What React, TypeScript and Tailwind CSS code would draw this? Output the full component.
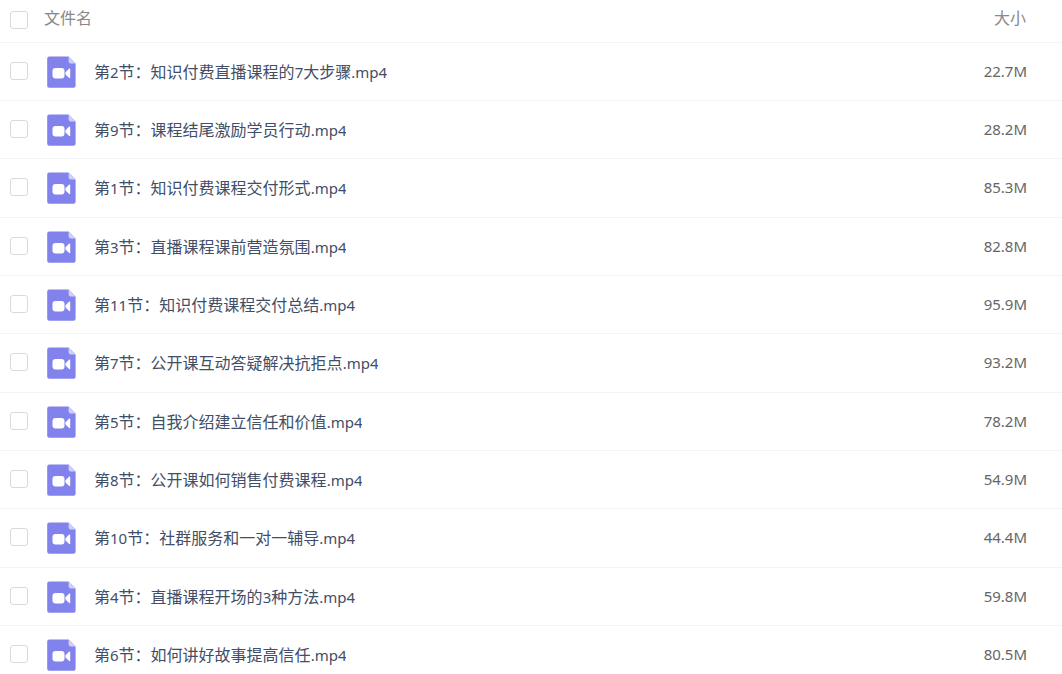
import React from 'react'

interface FileItem {
    name: string
    size: string
}

const files: FileItem[] = [
    { name: '第2节：知识付费直播课程的7大步骤.mp4', size: '22.7M' },
    { name: '第9节：课程结尾激励学员行动.mp4', size: '28.2M' },
    { name: '第1节：知识付费课程交付形式.mp4', size: '85.3M' },
    { name: '第3节：直播课程课前营造氛围.mp4', size: '82.8M' },
    { name: '第11节：知识付费课程交付总结.mp4', size: '95.9M' },
    { name: '第7节：公开课互动答疑解决抗拒点.mp4', size: '93.2M' },
    { name: '第5节：自我介绍建立信任和价值.mp4', size: '78.2M' },
    { name: '第8节：公开课如何销售付费课程.mp4', size: '54.9M' },
    { name: '第10节：社群服务和一对一辅导.mp4', size: '44.4M' },
    { name: '第4节：直播课程开场的3种方法.mp4', size: '59.8M' },
    { name: '第6节：如何讲好故事提高信任.mp4', size: '80.5M' },
]

function VideoIcon() {
    return (
        <svg width="29" height="32" viewBox="0 0 29 32" className="block shrink-0" aria-hidden="true">
            <path d="M2.2 .6H21.6L28.6 7.4V29.8a2 2 0 0 1-2 2H2.2a2 2 0 0 1-2-2V2.6a2 2 0 0 1 2-2Z" fill="#8182ec" />
            <path d="M21.6 .6L28.6 7.4H23.4a1.8 1.8 0 0 1-1.8-1.8Z" fill="#cfcffa" />
            <rect x="5.5" y="12" width="12" height="10.6" rx="3" fill="#fff" />
            <path d="M23.2 13.2c0-.8-.5-1-1-.6l-3 2.8a2.4 2.4 0 0 0 0 3.8l3 2.8c.5.4 1 .2 1-.6Z" fill="#fff" />
        </svg>
    )
}

function Checkbox({ label }: { label: string }) {
    return (
        <input
            type="checkbox"
            aria-label={label}
            className="block size-[18px] appearance-none rounded-[3px] border border-[#d9d9e0] bg-white checked:border-[#8182ec] checked:bg-[#8182ec]"
        />
    )
}

// latin letters and digits run one step smaller than the Chinese text
function FileName({ name }: { name: string }) {
    return (
        <span className="truncate">
            {name.split(/([\w.]+)/).map((part, i) =>
                i % 2 ? <span key={i} className="text-[15px]">{part}</span> : part
            )}
        </span>
    )
}

export default function App() {
    return (
        <main className="w-full overflow-hidden bg-white font-['Noto_Sans','Noto_Sans_CJK_SC',sans-serif] text-base leading-6">
            <table className="w-full table-fixed border-separate border-spacing-0">
                <thead>
                    <tr className="h-[43px] text-[#888888]">
                        <th className="w-11 border-b border-[#f3f4f7] pb-0.5 pl-[10px]">
                            <Checkbox label="全选" />
                        </th>
                        <th className="border-b border-[#f3f4f7] pb-1.5 text-left font-normal">文件名</th>
                        <th className="w-40 border-b border-[#f3f4f7] pb-1.5 pr-9 text-right font-normal">大小</th>
                    </tr>
                </thead>
                <tbody>
                    {files.map((file) => (
                        <tr key={file.name} className="h-[58px] nth-[3n]:h-[59px]">
                            <td className="border-b border-[#f3f4f7] pb-0.5 pl-[10px]">
                                <Checkbox label={file.name} />
                            </td>
                            <td className="border-b border-[#f3f4f7] pl-[3px]">
                                <div className="flex items-center gap-[18px] text-[#424e67]">
                                    <VideoIcon />
                                    <FileName name={file.name} />
                                </div>
                            </td>
                            <td className="border-b border-[#f3f4f7] pb-0.5 pr-[35px] text-right text-[15px] text-[#666666]">
                                {file.size}
                            </td>
                        </tr>
                    ))}
                </tbody>
            </table>
        </main>
    )
}
